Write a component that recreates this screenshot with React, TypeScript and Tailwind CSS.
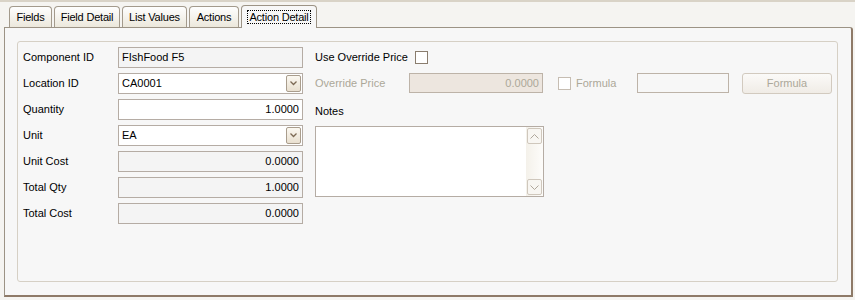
import React from "react";

const font = { fontFamily: '"Liberation Sans", Arial, sans-serif' };

function Tab({ label, width, active }: { label: string; width: string; active?: boolean }) {
  if (active) {
    return (
      <div
        className={`relative z-10 -mb-px flex h-[23px] items-center justify-center rounded-t-[4px] border border-b-0 border-[#9c9385] bg-[#f7f7f7] ${width}`}
      >
        <span className="border border-dotted border-black px-px leading-[12px] tracking-[-0.2px]">{label}</span>
      </div>
    );
  }
  return (
    <div
      className={`flex h-[21px] items-center justify-center rounded-t-[4px] border border-b-0 border-[#a39a8c] bg-gradient-to-b from-[#fefefe] to-[#ece8dc] tracking-[-0.2px] ${width}`}
    >
      {label}
    </div>
  );
}

function Field({
  value,
  align = "left",
  tone = "white",
  combo,
}: {
  value: string;
  align?: "left" | "right";
  tone?: "white" | "gray";
  combo?: boolean;
}) {
  return (
    <div
      className={`flex h-[21px] w-[185px] items-center border border-[#b5aca4] ${
        tone === "white" ? "bg-white" : "bg-[#f4f4f4]"
      }`}
    >
      <span className={`flex-1 px-[3px] ${align === "right" ? "text-right" : ""}`}>{value}</span>
      {combo ? (
        <div className="mr-px flex h-[17px] w-[15px] items-center justify-center rounded-[2px] border border-[#a99d8d] bg-gradient-to-b from-[#fbf8f1] to-[#e9e0d0]">
          <svg width="7" height="5" viewBox="0 0 7 5">
            <path d="M0.5 0.5 L3.5 3.5 L6.5 0.5" fill="none" stroke="#7d6a55" strokeWidth="1.3" />
          </svg>
        </div>
      ) : null}
    </div>
  );
}

function Row({ label, children }: { label: string; children: React.ReactNode }) {
  return (
    <div className="flex h-[26px] items-center">
      <div className="w-[95px]">{label}</div>
      {children}
    </div>
  );
}

export default function App() {
  return (
    <div
      className="h-[300px] w-[855px] overflow-hidden border-t-2 border-[#d9d3c7] bg-[#f5f4f1] text-[11px] text-black"
      style={font}
    >
      <div className="flex items-end gap-[2px] pl-[9px] pt-[3px]">
        <Tab label="Fields" width="w-[43px]" />
        <Tab label="Field Detail" width="w-[66px]" />
        <Tab label="List Values" width="w-[65px]" />
        <Tab label="Actions" width="w-[50px]" />
        <Tab label="Action Detail" width="w-[76px]" active />
      </div>

      <div className="ml-[4px] mr-[2px] h-[270px] rounded-tr-[3px] border border-b-2 border-r-2 border-[#9c9385] border-b-[#8e7a68] border-r-[#8e7a68] bg-[#f7f7f7] pl-[12px] pr-[13px] pt-[13px]">
        <div className="flex h-[241px] gap-[12px] rounded-[3px] border border-[#d6d0c5] bg-[#f7f7f7] pl-[5px] pt-[2px]">
          <div className="flex flex-col">
            <Row label="Component ID">
              <Field value="FIshFood F5" tone="gray" />
            </Row>
            <Row label="Location ID">
              <Field value="CA0001" combo />
            </Row>
            <Row label="Quantity">
              <Field value="1.0000" align="right" />
            </Row>
            <Row label="Unit">
              <Field value="EA" combo />
            </Row>
            <Row label="Unit Cost">
              <Field value="0.0000" align="right" tone="gray" />
            </Row>
            <Row label="Total Qty">
              <Field value="1.0000" align="right" tone="gray" />
            </Row>
            <Row label="Total Cost">
              <Field value="0.0000" align="right" tone="gray" />
            </Row>
          </div>

          <div className="flex flex-col">
            <div className="flex h-[26px] items-center">
              <span>Use Override Price</span>
              <div className="ml-[7px] h-[13px] w-[13px] border border-[#8a7d6e] bg-white" />
            </div>
            <div className="flex h-[26px] items-center text-[#aca899]">
              <span className="w-[94px]">Override Price</span>
              <div className="flex h-[20px] w-[134px] items-center justify-end border border-[#bdb3a8] bg-[#ede6df] px-[3px]">
                0.0000
              </div>
              <div className="ml-[15px] h-[13px] w-[13px] border border-[#c6bdb2] bg-white" />
              <span className="ml-[5px] w-[61px]">Formula</span>
              <div className="h-[20px] w-[92px] border border-[#bdb3a8] bg-[#f7f7f7]" />
              <div className="ml-[13px] flex h-[21px] w-[90px] items-center justify-center rounded-[3px] border border-[#d2cabf] bg-gradient-to-b from-[#fbfaf8] to-[#f0ece6]">
                Formula
              </div>
            </div>
            <div className="flex h-[30px] items-center">Notes</div>
            <div className="flex h-[71px] w-[229px] border border-[#b5aca4] bg-white">
              <div className="flex-1" />
              <div className="flex w-[17px] flex-col justify-between bg-gradient-to-r from-[#f4f1ea] to-[#fdfcfa] p-px">
                <div className="flex h-[16px] items-center justify-center rounded-[2px] border border-[#cfc7bc] bg-[#f8f6f2]">
                  <svg width="9" height="5" viewBox="0 0 9 5">
                    <path d="M0.5 4.5 L4.5 0.5 L8.5 4.5" fill="none" stroke="#b0a79b" strokeWidth="1" />
                  </svg>
                </div>
                <div className="flex h-[16px] items-center justify-center rounded-[2px] border border-[#cfc7bc] bg-[#f8f6f2]">
                  <svg width="9" height="5" viewBox="0 0 9 5">
                    <path d="M0.5 0.5 L4.5 4.5 L8.5 0.5" fill="none" stroke="#b0a79b" strokeWidth="1" />
                  </svg>
                </div>
              </div>
            </div>
          </div>
        </div>
      </div>
    </div>
  );
}
